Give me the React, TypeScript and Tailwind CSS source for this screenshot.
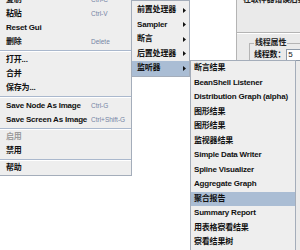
import React from "react";

type Item =
  | { kind: "item"; label: string; accel?: string; disabled?: boolean }
  | { kind: "sep"; h: 3 | 4 };

const leftItems: Item[] = [
  { kind: "item", label: "复制", accel: "Ctrl-C" },
  { kind: "item", label: "粘贴", accel: "Ctrl-V" },
  { kind: "item", label: "Reset Gui" },
  { kind: "item", label: "删除", accel: "Delete" },
  { kind: "sep", h: 4 },
  { kind: "item", label: "打开..." },
  { kind: "item", label: "合并" },
  { kind: "item", label: "保存为..." },
  { kind: "sep", h: 4 },
  { kind: "item", label: "Save Node As Image", accel: "Ctrl-G" },
  { kind: "item", label: "Save Screen As Image", accel: "Ctrl+Shift-G" },
  { kind: "sep", h: 3 },
  { kind: "item", label: "启用", disabled: true },
  { kind: "item", label: "禁用" },
  { kind: "sep", h: 3 },
  { kind: "item", label: "帮助" },
];

const subItems = ["前置处理器", "Sampler", "断言", "后置处理器", "监听器"];

const listenerItems = [
  "断言结果",
  "BeanShell Listener",
  "Distribution Graph (alpha)",
  "图形结果",
  "图形结果",
  "监视器结果",
  "Simple Data Writer",
  "Spline Visualizer",
  "Aggregate Graph",
  "聚合报告",
  "Summary Report",
  "用表格察看结果",
  "察看结果树",
];

function Arrow() {
  return (
    <svg width="3" height="5" viewBox="0 0 3 5" className="block">
      <polygon points="0,0 3,2.5 0,5" fill="#111" />
    </svg>
  );
}

export default function App() {
  return (
    <div className="relative w-[300px] h-[250px] overflow-hidden bg-white font-['Liberation_Sans','Noto_Sans_CJK_SC',sans-serif] text-[8px] font-bold tracking-[-0.2px] text-[#111]">
      {/* base window */}
      <div className="flex h-full">
        <div className="w-[237px] shrink-0 bg-white border-r border-[#b4b4b4]" />
        <div className="flex-1 bg-[#eaeaea] flex flex-col">
          {/* group 1 */}
          <div className="h-[33px] border-b border-[#b4b4b4]">
            <div className="-mt-[5px] pl-[6px] whitespace-nowrap leading-[10px] text-[#222]">
              在取样器错误后要执行的动作
            </div>
          </div>
          <div className="h-px bg-white" />
          {/* group 2 */}
          <div className="ml-[12px] mt-[9px] flex-1 border-t border-l border-[#b4b4b4]">
            <div className="-mt-[6px] ml-[4px] w-fit px-[1px] bg-[#eaeaea] leading-[10px] whitespace-nowrap text-[#222]">
              线程属性
            </div>
            <div className="mt-[1px] flex items-center h-[12px] pl-[4px] whitespace-nowrap">
              <span className="leading-[10px]">线程数：</span>
              <div className="ml-[1px] w-[24px] h-[12px] shrink-0 bg-white border border-[#8d99a8] pl-[1px] leading-[10px] font-normal">
                5
              </div>
            </div>
          </div>
        </div>
      </div>

      {/* main popup menu */}
      <div className="absolute left-0 top-[-7px] w-[132px] bg-[#eeeeee] border-r border-b border-[#a4adba] flex flex-col">
        {leftItems.map((it, i) =>
          it.kind === "sep" ? (
            <div key={i} className={it.h === 4 ? "h-[4px] pt-[1px]" : "h-[3px] pt-[1px]"}>
              <div className="h-px bg-[#aab8cd]" />
              <div className="h-px bg-white" />
            </div>
          ) : (
            <div key={i} className="h-[14px] flex items-center pl-[6px] whitespace-nowrap">
              <span className={"w-[85px] shrink-0 " + (it.disabled ? "text-[#9c9c9c]" : "")}>{it.label}</span>
              {it.accel && (
                <span className="text-[6.5px] font-normal tracking-normal text-[#7484a4]">{it.accel}</span>
              )}
            </div>
          )
        )}
      </div>

      {/* submenu */}
      <div className="absolute left-[131px] top-0 w-[59px] bg-[#eeeeee] border border-[#a4adba] pt-[2px] flex flex-col">
        {subItems.map((s, i) => (
          <div
            key={i}
            className={
              "h-[14.5px] flex items-center justify-between pl-[5px] pr-[3px] whitespace-nowrap " +
              (s === "监听器" ? "bg-[#aabdd4]" : "")
            }
          >
            <span>{s}</span>
            <Arrow />
          </div>
        ))}
      </div>

      {/* listener submenu */}
      <div className="absolute left-[190px] top-[60px] w-[106px] bg-[#eeeeee] border border-[#a4adba] flex flex-col">
        {listenerItems.map((s, i) => (
          <div
            key={i}
            className={
              "h-[14.5px] flex items-center pl-[3px] whitespace-nowrap " +
              (s === "聚合报告" ? "bg-[#aabdd4]" : "")
            }
          >
            {s}
          </div>
        ))}
      </div>
    </div>
  );
}
